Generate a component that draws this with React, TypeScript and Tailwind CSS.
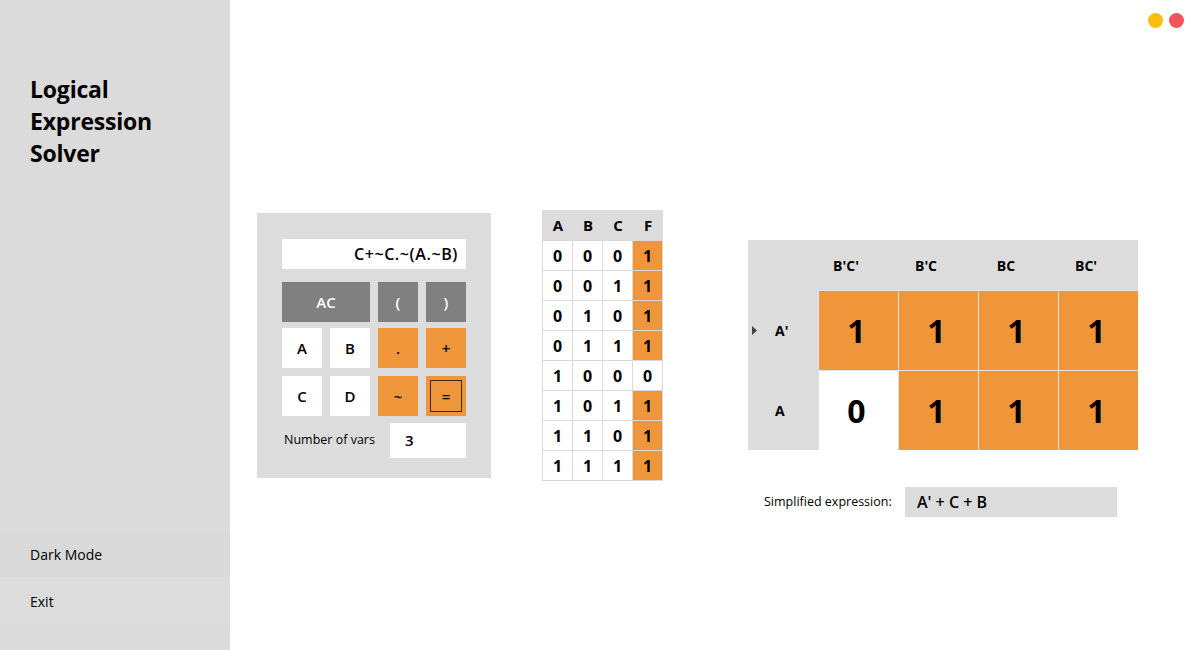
import React from "react";

const font = { fontFamily: '"Open Sans", "Noto Sans", "Liberation Sans", sans-serif' };

const truth = [
  [0, 0, 0, 1],
  [0, 0, 1, 1],
  [0, 1, 0, 1],
  [0, 1, 1, 1],
  [1, 0, 0, 0],
  [1, 0, 1, 1],
  [1, 1, 0, 1],
  [1, 1, 1, 1],
];

const kmap = [
  ["A'", [1, 1, 1, 1]],
  ["A", [0, 1, 1, 1]],
] as const;

function Btn({ label, kind, wide, focus }: { label: string; kind: "gray" | "white" | "orange"; wide?: boolean; focus?: boolean }) {
  const cls =
    kind === "gray"
      ? "bg-[#808080] text-white"
      : kind === "orange"
      ? "bg-[#f0963a] text-black"
      : "bg-white text-black";
  return (
    <div className={`${cls} ${wide ? "w-[88px]" : "w-[40px]"} h-[40px] flex items-center justify-center text-[15px] font-semibold relative`}>
      {focus && <div className="absolute left-[4px] top-[4px] right-[4px] bottom-[4px] border border-[#3d2610]" />}
      <span>{label}</span>
    </div>
  );
}

export default function App() {
  return (
    <div className="w-[1200px] h-[650px] bg-white flex relative overflow-hidden text-black" style={font}>
      {/* Sidebar */}
      <div className="w-[230px] h-full bg-[#dbdbdb] flex flex-col pb-[25px]">
        <div className="pt-[73px] px-[30px] text-[23px] leading-[32px] font-bold tracking-[-0.2px]">
          <div>Logical</div>
          <div>Expression</div>
          <div>Solver</div>
        </div>
        <div className="flex-1" />
        <div className="h-[46px] flex items-center px-[30px] text-[14px] bg-[#d9d9d9]">Dark Mode</div>
        <div className="h-[48px] flex items-center px-[30px] text-[14px] bg-[#dcdcdc]">Exit</div>
      </div>

      {/* Content */}
      <div className="flex-1 flex items-start pt-[210px] pl-[27px]">
        {/* Calculator */}
        <div className="mt-[3px] w-[234px] h-[265px] bg-[#dcdcdc] pt-[26px] pl-[25px]">
          <div className="w-[184px] h-[30px] bg-white flex items-center justify-end pr-[8px] text-[16px] font-semibold tracking-[0.6px]">
            C+~C.~(A.~B)
          </div>
          <div className="mt-[13px] flex gap-[8px]">
            <Btn label="AC" kind="gray" wide />
            <Btn label="(" kind="gray" />
            <Btn label=")" kind="gray" />
          </div>
          <div className="mt-[6px] flex gap-[8px]">
            <Btn label="A" kind="white" />
            <Btn label="B" kind="white" />
            <Btn label="." kind="orange" />
            <Btn label="+" kind="orange" />
          </div>
          <div className="mt-[8px] flex gap-[8px]">
            <Btn label="C" kind="white" />
            <Btn label="D" kind="white" />
            <Btn label="~" kind="orange" />
            <Btn label="=" kind="orange" focus />
          </div>
          <div className="mt-[7px] flex items-center">
            <div className="w-[108px] pl-[2px] text-[12.5px]">Number of vars</div>
            <div className="w-[76px] h-[35px] bg-white flex items-center pl-[15px] text-[15px] font-semibold">3</div>
          </div>
        </div>

        {/* Truth table */}
        <div className="ml-[51px] w-[121px] border-l border-b border-[#d9d9d9]">
          <div className="flex h-[30px] bg-[#dcdcdc]">
            {["A", "B", "C", "F"].map((h) => (
              <div key={h} className="w-[30px] flex items-center justify-center text-[15px] font-bold">
                {h}
              </div>
            ))}
          </div>
          {truth.map((r, i) => (
            <div key={i} className="flex h-[30px] border-t border-[#d9d9d9]">
              {r.map((v, j) => (
                <div
                  key={j}
                  className={`w-[30px] border-r border-[#d9d9d9] flex items-center justify-center text-[16px] font-bold ${
                    j === 3 && v === 1 ? "bg-[#f0963a]" : "bg-white"
                  }`}
                >
                  {v}
                </div>
              ))}
            </div>
          ))}
        </div>

        {/* K-map */}
        <div className="ml-[85px] mt-[30px] flex flex-col">
          <div className="w-[390px] bg-[#dcdcdc]">
            <div className="flex h-[50px]">
              <div className="w-[70px]" />
              {["B'C'", "B'C", "BC", "BC'"].map((h) => (
                <div key={h} className="w-[80px] flex items-center justify-center pr-[24px] text-[14px] font-bold">
                  {h}
                </div>
              ))}
            </div>
            {kmap.map(([lbl, vals], i) => (
              <div key={i} className="flex h-[80px]">
                <div className="w-[70px] flex items-center relative">
                  {i === 0 && (
                    <svg className="absolute left-[4px] top-[36px]" width="5" height="9" viewBox="0 0 5 9">
                      <path d="M0 0 L5 4.5 L0 9 Z" fill="#444" />
                    </svg>
                  )}
                  <span className="ml-[27px] text-[14px] font-bold">{lbl}</span>
                </div>
                {vals.map((v, j) => (
                  <div
                    key={j}
                    className={`w-[80px] h-[80px] flex items-center justify-center pr-[4px] text-[32px] font-bold border-l border-t border-[#e3e3e3] ${
                      v === 1 ? "bg-[#f0963a]" : "bg-white"
                    }`}
                  >
                    {v}
                  </div>
                ))}
              </div>
            ))}
          </div>
          <div className="mt-[37px] flex items-center">
            <div className="w-[157px] pl-[16px] text-[12.5px]">Simplified expression:</div>
            <div className="w-[212px] h-[30px] bg-[#dcdcdc] flex items-center pl-[12px] text-[16px] font-semibold">
              A' + C + B
            </div>
          </div>
        </div>
      </div>

      {/* Window dots */}
      <div className="absolute top-[13px] right-[16px] flex gap-[6px]">
        <div className="w-[15px] h-[15px] rounded-full bg-[#fbbd0b]" />
        <div className="w-[15px] h-[15px] rounded-full bg-[#f2545b]" />
      </div>
    </div>
  );
}
